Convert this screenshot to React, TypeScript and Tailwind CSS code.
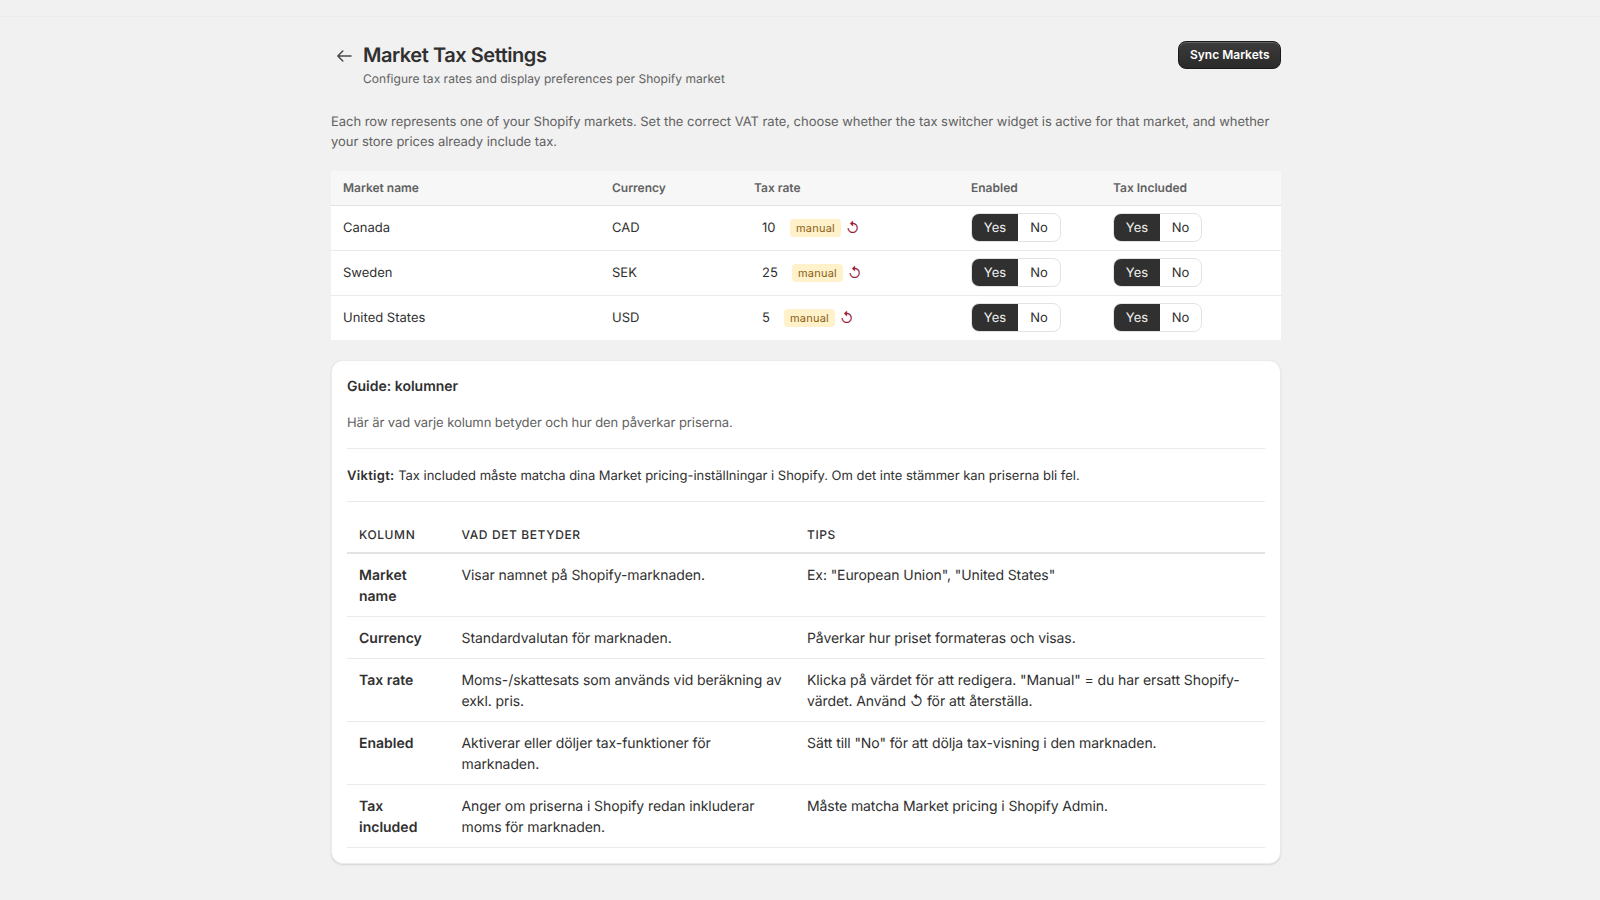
const font = "font-['Inter','Noto_Sans',sans-serif] [text-rendering:geometricPrecision]";

function Toggle({ wide }: { wide?: boolean }) {
  return (
    <div className="inline-flex h-[29px] rounded-lg border border-[#e3e3e3] bg-white text-[13px] leading-[20px] overflow-hidden">
      <span className="flex items-center justify-center w-[46px] bg-[#303030] text-[#f1f1f1]">Yes</span>
      <span className={wide ? "flex items-center justify-center w-[42px] text-[#303030]" : "flex items-center justify-center w-[41px] text-[#303030]"}>No</span>
    </div>
  );
}

const markets = [
  { name: "Canada", cur: "CAD", rate: "10", gap: "w-[28px]" },
  { name: "Sweden", cur: "SEK", rate: "25", gap: "w-[30px]" },
  { name: "United States", cur: "USD", rate: "5", gap: "w-[22px]" },
];

const guide: { col: string; desc: string; tip: string }[] = [
  { col: "Market name", desc: "Visar namnet på Shopify-marknaden.", tip: 'Ex: "European Union", "United States"' },
  { col: "Currency", desc: "Standardvalutan för marknaden.", tip: "Påverkar hur priset formateras och visas." },
  {
    col: "Tax rate",
    desc: "Moms-/skattesats som används vid beräkning av exkl. pris.",
    tip: 'Klicka på värdet för att redigera. "Manual" = du har ersatt Shopify-värdet. Använd ↺ för att återställa.',
  },
  { col: "Enabled", desc: "Aktiverar eller döljer tax-funktioner för marknaden.", tip: 'Sätt till "No" för att dölja tax-visning i den marknaden.' },
  { col: "Tax included", desc: "Anger om priserna i Shopify redan inkluderar moms för marknaden.", tip: "Måste matcha Market pricing i Shopify Admin." },
];

export default function App() {
  return (
    <div className={`${font} min-h-[900px] bg-[#f1f1f1] pb-4 text-[#303030] antialiased`}>
      <div className="h-[17px] border-b border-[#ebebeb]" />
      <div className="pl-3">
        <div className="mx-auto w-[950px] pt-6">
          <div className="flex items-start justify-between">
            <div className="flex items-start">
              <svg viewBox="0 0 20 20" className="mt-[5px] ml-[3px] mr-[9px] h-5 w-5 text-[#4a4a4a]" fill="none" stroke="currentColor" strokeWidth="1.5" strokeLinecap="round" strokeLinejoin="round">
                <path d="M17 10H3.8M8.8 5 3.8 10 8.8 15" />
              </svg>
              <div>
                <h1 className="text-[20px] leading-[28px] font-semibold tracking-[-0.45px]">Market Tax Settings</h1>
                <p className="mt-[2px] text-[12px] leading-[16px] tracking-[0.03px] text-[#616161]">Configure tax rates and display preferences per Shopify market</p>
              </div>
            </div>
            <button className="h-[28px] rounded-lg border border-[#1a1a1a] bg-gradient-to-b from-[#3c3c3c] to-[#2a2a2a] px-[10.5px] text-[12px] leading-[16px] font-semibold text-white shadow-[inset_0_1px_0_rgba(255,255,255,0.2)]">
              Sync Markets
            </button>
          </div>

          <p className="mt-[25px] text-[13px] leading-[20px] tracking-[-0.035px] text-[#616161]">
            Each row represents one of your Shopify markets. Set the correct VAT rate, choose whether the tax switcher widget is active for that market, and whether your store prices already include tax.
          </p>

          <table className="mt-[19px] w-full table-fixed border-collapse bg-white text-[13px]">
            <colgroup>
              <col className="w-[269px]" />
              <col className="w-[142px]" />
              <col className="w-[217px]" />
              <col className="w-[142px]" />
              <col />
            </colgroup>
            <thead>
              <tr className="h-[34px] bg-[#f7f7f7] border-b border-[#e3e3e3] text-left text-[12px] font-semibold text-[#616161]">
                <th className="pl-3 font-semibold">Market name</th>
                <th className="pl-3 font-semibold">Currency</th>
                <th className="pl-3 font-semibold">Tax rate</th>
                <th className="pl-3 font-semibold">Enabled</th>
                <th className="pl-3 font-semibold">Tax Included</th>
              </tr>
            </thead>
            <tbody>
              {markets.map((m) => (
                <tr key={m.name} className="h-[45px] border-b border-[#ebebeb] last:border-b-0">
                  <td className="pl-3 pt-[2px]">{m.name}</td>
                  <td className="pl-3 pt-[2px]">{m.cur}</td>
                  <td className="pl-3">
                    <div className="flex items-center">
                      <span className={`pl-2 leading-[20px] ${m.gap}`}>{m.rate}</span>
                      <span className="ml-[8px] rounded-[4px] bg-[#fff1c9] px-[6px] text-[11px] leading-[18px] tracking-[0.02em] text-[#8a6116]">manual</span>
                      <span className="ml-[5px] pt-[2px] text-[14px] leading-[18px] text-[#9b1c3a]">↺</span>
                    </div>
                  </td>
                  <td className="pl-3"><Toggle wide /></td>
                  <td className="pl-3"><Toggle /></td>
                </tr>
              ))}
            </tbody>
          </table>

          <div className="mt-5 rounded-xl border border-[#ebebeb] bg-white px-[15px] pt-4 pb-[15px] shadow-[0_1px_2px_rgba(0,0,0,0.12)]">
            <h2 className="text-[14px] leading-[20px] font-semibold">Guide: kolumner</h2>
            <p className="mt-[16px] text-[13px] leading-[20px] tracking-[-0.08px] text-[#616161]">Här är vad varje kolumn betyder och hur den påverkar priserna.</p>
            <div className="mt-[15px] border-t border-[#ebebeb] pt-[17px] pb-[15px] text-[13px] leading-[20px] tracking-[-0.02px]">
              <strong className="font-semibold tracking-[0.3px]">Viktigt:</strong> Tax included måste matcha dina Market pricing-inställningar i Shopify. Om det inte stämmer kan priserna bli fel.
            </div>
            <table className="w-full table-fixed border-collapse border-t border-[#ebebeb] text-[14px] leading-[21px]">
              <colgroup>
                <col className="w-[102.5px]" />
                <col className="w-[345.5px]" />
                <col />
              </colgroup>
              <thead>
                <tr className="h-[51px] border-b-2 border-[#e3e3e3] text-left text-[12px] tracking-[0.05em]">
                  <th className="px-3 pt-[16px] font-medium">KOLUMN</th>
                  <th className="px-3 pt-[16px] font-medium">VAD DET BETYDER</th>
                  <th className="px-3 pt-[16px] font-medium">TIPS</th>
                </tr>
              </thead>
              <tbody>
                {guide.map((g) => (
                  <tr key={g.col} className="border-b border-[#ebebeb] align-top">
                    <td className="px-3 pt-[11px] pb-[9px] font-semibold">{g.col}</td>
                    <td className="px-3 pt-[11px] pb-[9px] tracking-[-0.09px]">{g.desc}</td>
                    <td className="px-3 pt-[11px] pb-[9px] tracking-[-0.09px]">{g.tip}</td>
                  </tr>
                ))}
              </tbody>
            </table>
          </div>
        </div>
      </div>
    </div>
  );
}
